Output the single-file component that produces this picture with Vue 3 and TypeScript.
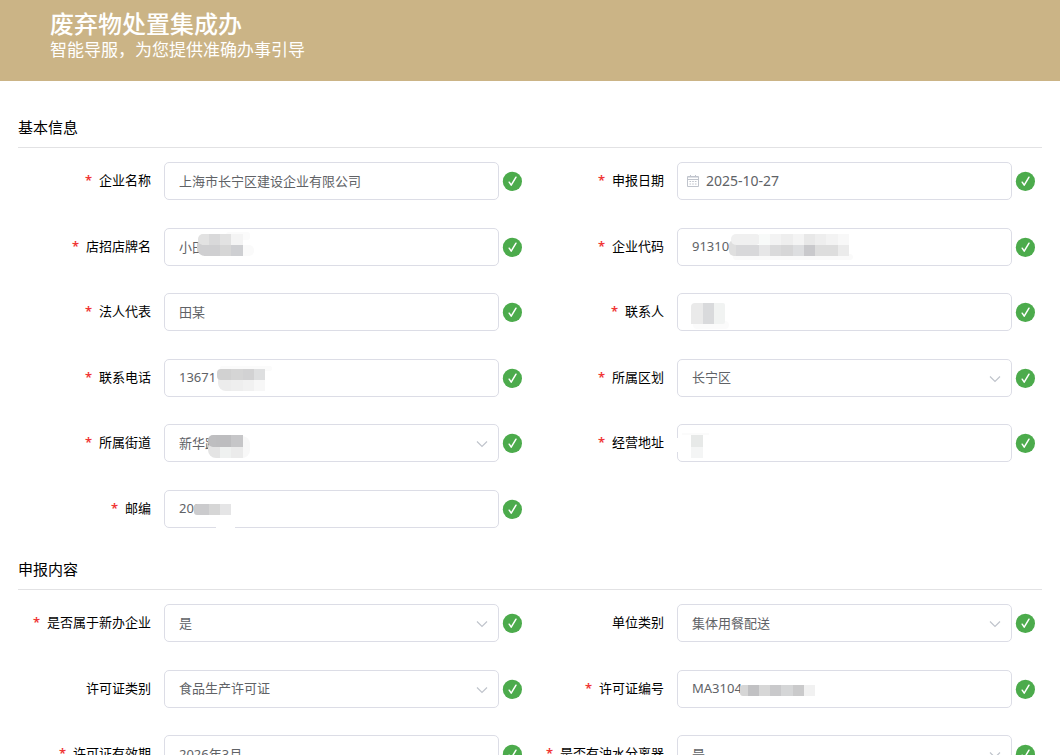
<script setup lang="ts">
import { ref } from 'vue'

/** One mosaic tile: x, y, width, height, colour and optional corner radius. */
type Tile = [number, number, number, number, string, number?]

interface Field {
  id: string
  label: string
  value: string
  kind: 'text' | 'select' | 'date'
  required: boolean
  tiles?: Tile[]
}

interface Section {
  title: string
  name: string
  fields: Field[]
}

const sections = ref<Section[]>([
  {
    title: '基本信息',
    name: 'basic',
    fields: [
      { id: 'company', label: '企业名称', value: '上海市长宁区建设企业有限公司', kind: 'text', required: true },
      { id: 'date', label: '申报日期', value: '2025-10-27', kind: 'date', required: true },
      {
        id: 'shop', label: '店招店牌名', value: '小田', kind: 'text', required: true,
        tiles: [
          [62, 4, 24, 8, '#fbfbfb', 3], [70, 17, 20, 11, '#fafafa', 5],
          [33, 10, 20, 18, '#cfcfd1', 8], [34, 6, 16, 11, '#e2e2e2', 5], [38, 11, 7, 6, '#e2e2e2'],
          [45, 6, 11, 11, '#d9d9da'], [56, 6, 11, 11, '#e2e2e2'], [67, 6, 12, 11, '#f4f4f4'],
          [40, 17, 16, 11, '#cfcfd1'], [56, 17, 11, 11, '#d6d6d6'], [67, 17, 12, 11, '#cecfd2'],
        ],
      },
      {
        id: 'code', label: '企业代码', value: '91310', kind: 'text', required: true,
        tiles: [
          [56, 26, 120, 6, '#fafafa', 3], [52, 12, 14, 16, '#dfdfdf', 5], [54, 6, 30, 11, '#f0f0f0', 5],
          [82, 6, 11, 11, '#f8faf9'], [93, 6, 11, 11, '#f3f3f3'], [104, 6, 12, 11, '#eeeeee'],
          [116, 6, 11, 11, '#f4f4f4'], [127, 6, 11, 11, '#e8e8e8'], [138, 6, 11, 11, '#eeeeee'],
          [149, 6, 12, 11, '#f3f3f3'], [161, 6, 11, 11, '#f8f8f8'],
          [59, 17, 23, 11, '#d8d8da'], [82, 17, 11, 11, '#e6e6e7'], [93, 17, 11, 11, '#dadadb'],
          [104, 17, 12, 11, '#d6d6d7'], [116, 17, 11, 11, '#dddee0'], [127, 17, 11, 11, '#c9c9cc'],
          [138, 17, 23, 11, '#dddddd'], [161, 17, 11, 11, '#ebebeb'],
        ],
      },
      { id: 'legal', label: '法人代表', value: '田某', kind: 'text', required: true },
      {
        id: 'contact', label: '联系人', value: '', kind: 'text', required: true,
        tiles: [
          [16, 28, 36, 8, '#fbfbfb', 4], [14, 10, 18, 21, '#eaeaea', 4], [14, 16, 12, 15, '#eaeaea'],
          [38, 10, 10, 21, '#f1f3f2', 2], [34, 10, 10, 21, '#f1f3f2'], [26, 10, 11, 21, '#d9dadc'],
        ],
      },
      {
        id: 'phone', label: '联系电话', value: '13671', kind: 'text', required: true,
        tiles: [
          [56, 7, 52, 5, '#fbfbfb', 2], [54, 12, 22, 20, '#ececec', 8],
          [53, 10, 20, 11, '#d1d1d1', 4], [60, 10, 7, 11, '#d1d1d1'], [67, 10, 12, 11, '#d5d5d5'],
          [79, 10, 11, 11, '#d2d2d3'], [90, 10, 11, 11, '#dedfe0'],
          [67, 21, 12, 11, '#eeeeee'], [79, 21, 11, 11, '#f1f1f1'], [90, 21, 11, 11, '#f7f7f7'],
        ],
      },
      { id: 'district', label: '所属区划', value: '长宁区', kind: 'select', required: true },
      {
        id: 'street', label: '所属街道', value: '新华路', kind: 'select', required: true,
        tiles: [
          [66, 12, 20, 22, '#f8f8f8', 8], [44, 16, 24, 18, '#e4e4e4', 8], [44, 11, 20, 12, '#bebec0', 5],
          [52, 11, 15, 12, '#bdbdbf'], [67, 11, 12, 12, '#c6c6c8'],
          [56, 23, 11, 11, '#eff1f0'], [67, 23, 12, 11, '#ebebeb'],
        ],
      },
      {
        id: 'address', label: '经营地址', value: '', kind: 'text', required: true,
        tiles: [
          [0, 14, 2, 14, '#ffffff'], [5, 9, 27, 2, '#fbfbfb'],
          [14, 11, 12, 12, '#e7e9e8'], [14, 23, 12, 11, '#f4f5f5'],
        ],
      },
      {
        id: 'postcode', label: '邮编', value: '200', kind: 'text', required: true,
        tiles: [
          [52, 36, 19, 2, '#ffffff'], [30, 14, 18, 11, '#cbcbcd', 3], [36, 14, 9, 11, '#cbcbcd'],
          [45, 14, 11, 11, '#d6d6d6'], [56, 14, 11, 11, '#e5e5e6'],
        ],
      },
    ],
  },
  {
    title: '申报内容',
    name: 'content',
    fields: [
      { id: 'isnew', label: '是否属于新办企业', value: '是', kind: 'select', required: true },
      { id: 'unit', label: '单位类别', value: '集体用餐配送', kind: 'select', required: false },
      { id: 'permit', label: '许可证类别', value: '食品生产许可证', kind: 'select', required: false },
      {
        id: 'permitno', label: '许可证编号', value: 'MA3104', kind: 'text', required: true,
        tiles: [
          [63, 15, 12, 11, '#d6d6d6', 3], [71, 15, 11, 11, '#c1c1c3'], [82, 15, 11, 11, '#d7d7d7'],
          [93, 15, 11, 11, '#c9c9cb'], [104, 15, 12, 11, '#d5d6d7'], [116, 15, 11, 11, '#cacacb'],
          [127, 15, 11, 11, '#f1f1f1'],
        ],
      },
      { id: 'expiry', label: '许可证有效期', value: '2026年3月', kind: 'text', required: true },
      { id: 'separator', label: '是否有油水分离器', value: '是', kind: 'select', required: true },
    ],
  },
])
</script>

<template>
  <div class="page">
    <header class="banner">
      <h1>废弃物处置集成办</h1>
      <p>智能导服，为您提供准确办事引导</p>
    </header>
    <form class="form" @submit.prevent>
      <section v-for="section in sections" :key="section.name">
        <h2>{{ section.title }}</h2>
        <div class="grid" :class="section.name">
          <div v-for="field in section.fields" :key="field.id" class="item">
            <label :for="field.id"><span v-if="field.required" class="star">*</span>{{ field.label }}</label>
            <div class="control" :class="field.kind">
              <select v-if="field.kind === 'select'" :id="field.id" v-model="field.value">
                <option>{{ field.value }}</option>
              </select>
              <input v-else :id="field.id" v-model="field.value" type="text" />
              <svg v-if="field.kind === 'select'" class="arrow" viewBox="0 0 12 8" aria-hidden="true">
                <path d="M1 1.5 6 6.5 11 1.5" fill="none" stroke="#c0c4cc" stroke-width="1.2" />
              </svg>
              <svg v-if="field.kind === 'date'" class="calendar" viewBox="0 0 12 12" aria-hidden="true">
                <path d="M.5 1.5h11v10H.5zM.5 4.5h11M3.5 0v3M8.5 0v3" fill="none" stroke="#c0c4cc" />
                <path d="M1 2.5h10" stroke="#dfe1e6" />
                <path d="M2.5 6.5h7M2.5 9h7" fill="none" stroke="#c0c4cc" stroke-dasharray="1.6 1.1" />
              </svg>
              <svg v-if="field.tiles" class="mosaic" aria-hidden="true">
                <rect
                  v-for="(t, i) in field.tiles" :key="i"
                  :x="t[0]" :y="t[1]" :width="t[2]" :height="t[3]" :fill="t[4]" :rx="t[5] ?? 0"
                />
              </svg>
            </div>
            <svg class="ok" viewBox="0 0 20 20" aria-hidden="true">
              <circle cx="10.4" cy="10.4" r="9.6" fill="#4cab4c" />
              <path d="M7.2 11.2 9.2 14.2 14 6.2" fill="none" stroke="#fff" stroke-width="1.5" stroke-linecap="round" stroke-linejoin="round" />
            </svg>
          </div>
        </div>
      </section>
    </form>
  </div>
</template>

<style>
html {
  scrollbar-width: none;
}
body {
  margin: 0;
  background: #fff;
}
</style>

<style scoped>
.page {
  font-family: "Noto Sans", "Noto Sans CJK SC", sans-serif;
  font-size: 13px;
  color: #000;
}
.banner {
  padding: 8px 50px 21px;
  background: #cbb486;
  color: #fff;
}
h1,
h2,
p {
  margin: 0;
  font-weight: 400;
}
h1 {
  font-size: 24px;
  font-weight: 500;
  line-height: 32px;
}
.banner p {
  font-size: 17px;
  line-height: 20px;
}
.form {
  padding: 5px 18px 0;
}
h2 {
  padding: 31px 0 10px;
  border-bottom: 1px solid #e2e2e4;
  font-size: 15px;
  line-height: 20px;
}
.grid {
  display: grid;
  grid-template-columns: 1fr 1fr;
  gap: 27px 2px;
  align-content: space-between;
  padding-top: 14px;
}
.basic {
  min-height: 366px;
}
.content {
  min-height: 169px;
}
.item {
  display: flex;
  align-items: center;
  min-width: 0;
  height: 38px;
}
label {
  flex: none;
  box-sizing: border-box;
  width: 146px;
  padding: 0 13px 2px 0;
  line-height: 20px;
  text-align: right;
  white-space: nowrap;
}
.star {
  margin-right: 7px;
  color: #f03434;
  font-weight: 600;
}
.control {
  position: relative;
  flex: 1;
  min-width: 0;
  height: 38px;
}
input,
select {
  display: block;
  box-sizing: border-box;
  width: 100%;
  height: 100%;
  margin: 0;
  padding: 0 14px 1px;
  border: 1px solid #dcdde6;
  border-radius: 5px;
  outline: none;
  background: #fff;
  color: #606266;
  font: inherit;
  appearance: none;
}
.date input {
  padding-left: 28px;
  font-size: 14px;
}
.arrow {
  position: absolute;
  top: 16px;
  right: 11px;
  width: 12px;
  height: 8px;
  pointer-events: none;
}
.calendar {
  position: absolute;
  top: 13px;
  left: 10px;
  width: 12px;
  height: 12px;
  pointer-events: none;
}
.mosaic {
  position: absolute;
  inset: 0;
  width: 100%;
  height: 100%;
  pointer-events: none;
}
.ok {
  flex: none;
  width: 20px;
  height: 20px;
  margin: 0 7px 0 3px;
}
</style>
